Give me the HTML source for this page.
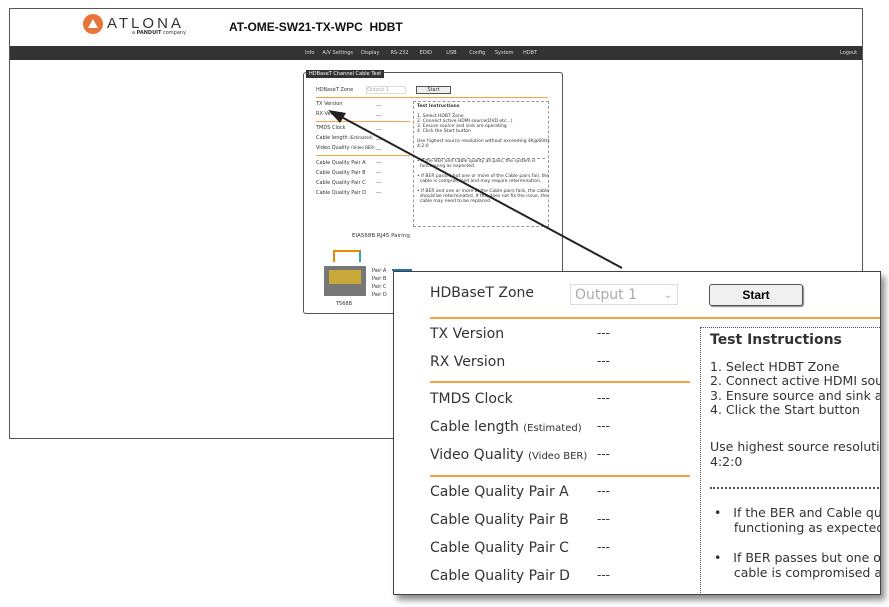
<!DOCTYPE html><html><head><style>
body{margin:0;width:889px;height:607px;background:#fff;position:relative;overflow:hidden;font-family:"DejaVu Sans","Liberation Sans",sans-serif}
.a{position:absolute}
.s{font-size:5px;color:#333;white-space:nowrap}
.b{font-size:14px;color:#333;white-space:nowrap}
.d{font-size:12px;color:#333}
</style></head><body>
<div class="a" style="left:9px;top:8px;width:852px;height:429px;border:1px solid #555"></div>
<div class="a" style="left:83px;top:14px;width:20px;height:20px;border-radius:50%;background:#e8743b"></div>
<div class="a" style="left:88px;top:19px;width:0;height:0;border-left:5px solid transparent;border-right:5px solid transparent;border-bottom:9px solid #fff"></div>
<div class="a" style="left:107px;top:15px;font-size:15px;letter-spacing:3px;color:#333;font-family:'Liberation Sans'">ATLONA</div>
<div class="a" style="left:132px;top:30px;font-size:5px;color:#333">a <b>PANDUIT</b> company</div>
<div class="a" style="left:229px;top:20px;font-size:12px;font-weight:bold;color:#111;font-family:'Liberation Sans'">AT-OME-SW21-TX-WPC &nbsp;HDBT</div>
<div class="a" style="left:10px;top:46px;width:852px;height:14px;background:#333"></div>
<div class="a" style="left:305px;top:50px;font-size:5px;color:#ddd;white-space:nowrap">Info&nbsp;&nbsp;&nbsp;&nbsp;&nbsp;A/V Settings&nbsp;&nbsp;&nbsp;&nbsp;&nbsp;Display&nbsp;&nbsp;&nbsp;&nbsp;&nbsp;&nbsp;&nbsp;RS-232&nbsp;&nbsp;&nbsp;&nbsp;&nbsp;&nbsp;&nbsp;EDID&nbsp;&nbsp;&nbsp;&nbsp;&nbsp;&nbsp;&nbsp;&nbsp;&nbsp;USB&nbsp;&nbsp;&nbsp;&nbsp;&nbsp;&nbsp;&nbsp;&nbsp;Config&nbsp;&nbsp;&nbsp;&nbsp;&nbsp;&nbsp;System&nbsp;&nbsp;&nbsp;&nbsp;&nbsp;&nbsp;HDBT</div>
<div class="a" style="left:840px;top:50px;font-size:5px;color:#ddd">Logout</div>
<!-- small panel -->
<div class="a" style="left:303px;top:72px;width:258px;height:240px;border:1px solid #555;border-radius:3px"></div>
<div class="a" style="left:306px;top:70px;background:#333;color:#fff;font-size:5px;padding:1px 3px">HDBaseT Channel Cable Test</div>
<div class="a s" style="left:316px;top:87px">HDBaseT Zone</div>
<div class="a s" style="left:366px;top:86px;color:#aaa;border:1px solid #ddd;width:38px">Output 1</div>
<div class="a s" style="left:416px;top:86px;border:1px solid #555;width:33px;text-align:center;background:#eee">Start</div>
<div class="a" style="left:316px;top:97px;width:232px;height:1px;background:#f2a23e"></div>
<div class="a" style="left:316px;top:121px;width:94px;height:1px;background:#f2a23e"></div>
<div class="a" style="left:316px;top:155px;width:94px;height:1px;background:#f2a23e"></div>
<div class="a s" style="left:316px;top:101px">TX Version</div>
<div class="a s" style="left:316px;top:111px">RX Version</div>
<div class="a s" style="left:316px;top:125px">TMDS Clock</div>
<div class="a s" style="left:316px;top:135px">Cable length <span style="font-size:4px">(Estimated)</span></div>
<div class="a s" style="left:316px;top:145px">Video Quality <span style="font-size:4px">(Video BER)</span></div>
<div class="a s" style="left:316px;top:158px;line-height:10px">Cable Quality Pair A<br>Cable Quality Pair B<br>Cable Quality Pair C<br>Cable Quality Pair D</div>
<div class="a s" style="left:376px;top:101px;line-height:10px">---<br>---</div>
<div class="a s" style="left:376px;top:125px;line-height:10px">---<br>---<br>---</div>
<div class="a s" style="left:376px;top:158px;line-height:10px">---<br>---<br>---<br>---</div>
<div class="a" style="left:413px;top:101px;width:134px;height:124px;border:1px dashed #999"></div>
<div class="a" style="left:417px;top:158px;width:128px;border-top:1px dashed #999"></div>
<div class="a s" style="left:417px;top:104px;font-size:4.5px;line-height:5px"><b>Test Instructions</b><br><br>1. Select HDBT Zone<br>2. Connect active HDMI source(DVD etc...)<br>3. Ensure source and sink are operating<br>4. Click the Start button<br><br>Use highest source resolution without exceeding 4K@60Hz<br>4:2:0<br><br><br>• If the BER and Cable quality all pass, the system is<br>&nbsp;&nbsp;functioning as expected.<br><br>• If BER passes but one or more of the Cable pairs fail, the<br>&nbsp;&nbsp;cable is compromised and may require retermination.<br><br>• If BER and one or more of the Cable pairs fails, the cable<br>&nbsp;&nbsp;should be reterminated. If this does not fix the issue, the<br>&nbsp;&nbsp;cable may need to be replaced.</div>
<div class="a s" style="left:352px;top:233px;font-size:5.5px">EIA568B RJ45 Pairing</div>
<div class="a" style="left:333px;top:250px;width:24px;height:10px;border:2px solid #3aa;border-bottom:none;border-color:#e80 #3aa #3a3 #e80"></div>
<div class="a" style="left:324px;top:266px;width:42px;height:30px;background:#777"></div>
<div class="a" style="left:329px;top:270px;width:32px;height:14px;background:#c9a83a"></div>
<div class="a s" style="left:336px;top:301px">T568B</div>
<div class="a s" style="left:372px;top:267px;line-height:8px">Pair A<br>Pair B<br>Pair C<br>Pair D</div>
<div class="a" style="left:392px;top:269px;width:20px;height:2px;background:#27a"></div>
<!-- arrow -->
<svg class="a" style="left:0;top:0" width="889" height="607"><line x1="622" y1="268" x2="336" y2="114" stroke="#222" stroke-width="2"/><polygon points="328,110 346,113 340,123" fill="#222"/></svg>
<!-- zoom panel -->
<div class="a" style="left:393px;top:271px;width:486px;height:322px;background:#fff;border:1px solid #444;box-shadow:4px 5px 6px rgba(0,0,0,.45);overflow:hidden">
<div class="a b" style="left:36px;top:13px">HDBaseT Zone</div>
<div class="a b" style="left:176px;top:12px;width:108px;height:21px;border:1px solid #ddd;color:#aaa;line-height:21px;box-sizing:border-box;padding-left:4px">Output 1<span style="position:absolute;right:5px;font-size:10px">⌄</span></div>
<div class="a" style="left:315px;top:12px;width:92px;height:20px;border:1px solid #555;border-radius:3px;background:#f0f0f0;font-size:12px;font-weight:bold;text-align:center;line-height:20px;box-shadow:1px 1px 1px #888;font-family:'Liberation Sans'">Start</div>
<div class="a" style="left:36px;top:45px;width:460px;height:2px;background:#f2a23e"></div>
<div class="a" style="left:36px;top:109px;width:260px;height:2px;background:#f2a23e"></div>
<div class="a" style="left:36px;top:203px;width:260px;height:2px;background:#f2a23e"></div>
<div class="a b" style="left:36px;top:54px">TX Version</div>
<div class="a b" style="left:36px;top:82px">RX Version</div>
<div class="a b" style="left:36px;top:119px">TMDS Clock</div>
<div class="a b" style="left:36px;top:147px">Cable length <span style="font-size:10px">(Estimated)</span></div>
<div class="a b" style="left:36px;top:175px">Video Quality <span style="font-size:10px">(Video BER)</span></div>
<div class="a b" style="left:36px;top:212px">Cable Quality Pair A</div>
<div class="a b" style="left:36px;top:240px">Cable Quality Pair B</div>
<div class="a b" style="left:36px;top:268px">Cable Quality Pair C</div>
<div class="a b" style="left:36px;top:296px">Cable Quality Pair D</div>
<div class="a d" style="left:203px;top:54px">---</div>
<div class="a d" style="left:203px;top:82px">---</div>
<div class="a d" style="left:203px;top:119px">---</div>
<div class="a d" style="left:203px;top:147px">---</div>
<div class="a d" style="left:203px;top:175px">---</div>
<div class="a d" style="left:203px;top:212px">---</div>
<div class="a d" style="left:203px;top:240px">---</div>
<div class="a d" style="left:203px;top:268px">---</div>
<div class="a d" style="left:203px;top:296px">---</div>
<div class="a" style="left:306px;top:55px;width:200px;height:280px;border:1px dotted #555"></div>
<div class="a" style="left:316px;top:215px;width:180px;border-top:2px dotted #555"></div>
<div class="a b" style="left:316px;top:60px;font-weight:bold">Test Instructions</div>
<div class="a" style="left:316px;top:88px;font-size:12.5px;color:#333;line-height:14.3px;white-space:nowrap">1. Select HDBT Zone<br>2. Connect active HDMI source<br>3. Ensure source and sink are<br>4. Click the Start button</div>
<div class="a" style="left:316px;top:168px;font-size:12.5px;color:#333;line-height:14.5px;white-space:nowrap">Use highest source resolution<br>4:2:0</div>
<div class="a" style="left:320px;top:233px;font-size:12.5px;color:#333;line-height:15px;white-space:nowrap">•&nbsp;&nbsp; If the BER and Cable quali<br>&nbsp;&nbsp;&nbsp;&nbsp; functioning as expected.<br><br>•&nbsp;&nbsp; If BER passes but one or m<br>&nbsp;&nbsp;&nbsp;&nbsp; cable is compromised and</div>
</div>
</body></html>
